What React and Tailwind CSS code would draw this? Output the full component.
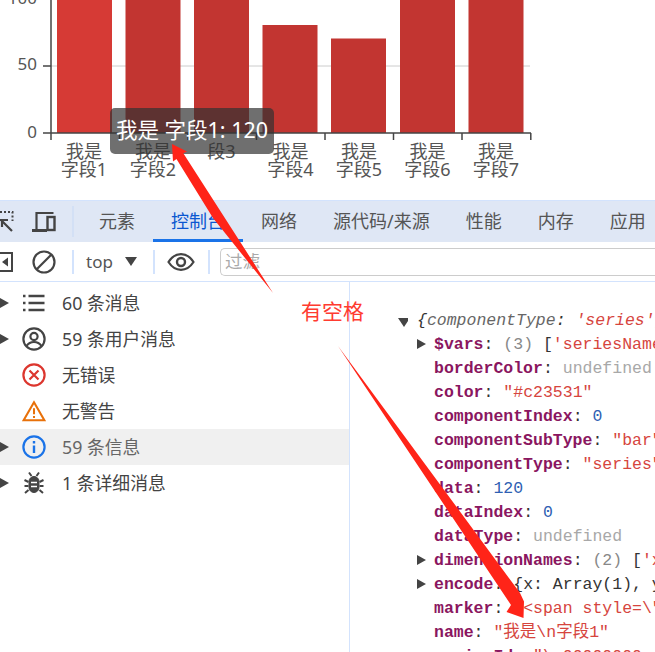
// App.jsx - echarts bar chart above a devtools console, with red annotation arrows

const bars = [
  { x: 57, top: -20, fill: "#d63a35" },
  { x: 125.5, top: -20, fill: "#c23531" },
  { x: 194, top: -20, fill: "#c23531" },
  { x: 262.5, top: 25, fill: "#c23531" },
  { x: 331, top: 38.5, fill: "#c23531" },
  { x: 400, top: -20, fill: "#c23531" },
  { x: 468.5, top: -20, fill: "#c23531" },
];

const labels = [
  { x: 84, lines: ["我是", "字段1"] },
  { x: 153, lines: ["我是", "字段2"] },
  { x: 221.5, lines: ["段3"] },
  { x: 290.5, lines: ["我是", "字段4"] },
  { x: 359, lines: ["我是", "字段5"] },
  { x: 427.5, lines: ["我是", "字段6"] },
  { x: 496, lines: ["我是", "字段7"] },
];

const tabs = ["元素", "控制台", "网络", "源代码/来源", "性能", "内存", "应用"];

function Chart() {
  return (
    <svg width="655" height="200" className="block fill-[#555] text-[18px]">
      <line x1="51" y1="66" x2="530" y2="66" stroke="#ccc" strokeWidth="1" />
      {bars.map((b) => (
        <rect key={b.x} x={b.x} y={b.top} width="55" height={133 - b.top} fill={b.fill} />
      ))}
      <line x1="51" y1="0" x2="51" y2="140" stroke="#444" strokeWidth="1.5" />
      <line x1="43" y1="66" x2="51" y2="66" stroke="#444" strokeWidth="1.5" />
      <line x1="43" y1="133" x2="531" y2="133" stroke="#444" strokeWidth="1.5" />
      {[119.5, 188, 256.5, 325, 393.5, 462, 530.8].map((x) => (
        <line key={x} x1={x} y1="133" x2={x} y2="140" stroke="#444" strokeWidth="1.5" />
      ))}
      <text x="37" y="4" textAnchor="end" className="text-[17px]">100</text>
      <text x="37" y="70" textAnchor="end" className="text-[17px]">50</text>
      <text x="37" y="138" textAnchor="end" className="text-[17px]">0</text>
      {labels.map((l) =>
        l.lines.map((t, i) => (
          <text key={t} x={l.x} y={158 + i * 18} textAnchor="middle">{t}</text>
        ))
      )}
    </svg>
  );
}

function Caret({ open, className }) {
  return (
    <svg width="10" height="10" viewBox="0 0 10 10" className={className}>
      <path d={open ? "M0 1h12L6 10z" : "M0 0l9 5-9 5z"} fill="#444" />
    </svg>
  );
}

function ToolbarTabs() {
  return (
    <div className="flex h-[42px] items-stretch overflow-hidden border-t border-[#d3e3fd] bg-[#dfe7f5]">
      <svg width="14" height="24" viewBox="0 0 14 24" className="mt-[8px] shrink-0 fill-none stroke-[#444]">
        <path d="M0 3h12.5v9" strokeWidth="2" strokeDasharray="2 2" />
        <path d="M12 22L1 11M0 11h8M2 10v8" strokeWidth="2.2" />
      </svg>
      <svg width="24" height="22" viewBox="0 0 24 22" className="ml-[18px] mt-[10px] shrink-0 fill-none stroke-[#444]">
        <path d="M4.5 19V2h17" strokeWidth="2.2" />
        <path d="M0 19.5h15" strokeWidth="3" />
        <rect x="15.5" y="6" width="7" height="13" strokeWidth="2.4" />
      </svg>
      <div className="ml-[16px] my-[5px] w-[2px] shrink-0 bg-[#d3e0f5]" />
      <div className="ml-[7px] flex shrink-0">
        {tabs.map((t) => (
          <div
            key={t}
            className={
              t === "控制台"
                ? "flex items-center whitespace-nowrap border-b-[3px] border-[#1a73e8] px-[18px] pt-[2px] text-[18px] text-[#0b57d0]"
                : "flex items-center whitespace-nowrap border-b-[3px] border-transparent px-[18px] pt-[2px] text-[18px] text-[#555]"
            }
          >
            {t}
          </div>
        ))}
      </div>
    </div>
  );
}

function FilterBar() {
  return (
    <div className="flex h-[40px] items-center border-b border-[#d3e3fd] bg-white">
      <svg width="13" height="20" viewBox="0 0 13 20" className="fill-none">
        <path d="M0 1h12v18H0" stroke="#444" strokeWidth="2" />
        <path d="M8 5.5v9L2 10z" fill="#444" />
      </svg>
      <svg width="24" height="24" viewBox="0 0 24 24" className="ml-[19px] fill-none stroke-[#444]">
        <circle cx="12" cy="12" r="10.5" strokeWidth="2.2" />
        <path d="M4.5 19.5l15-15" strokeWidth="2.2" />
      </svg>
      <div className="ml-[16px] h-[24px] w-[2px] bg-[#d3e3fd]" />
      <span className="ml-[12px] text-[17px] text-[#555]">top</span>
      <svg width="12" height="9" viewBox="0 0 12 9" className="ml-[12px]">
        <path d="M0 0h12L6 9z" fill="#444" />
      </svg>
      <div className="ml-[16px] h-[24px] w-[2px] bg-[#d3e3fd]" />
      <svg width="28" height="18" viewBox="0 0 28 18" className="ml-[12px] fill-none stroke-[#444]">
        <path d="M1.5 9C5 3.5 9 1.2 14 1.2S23 3.5 26.5 9C23 14.5 19 16.8 14 16.8S5 14.5 1.5 9z" strokeWidth="2.2" />
        <circle cx="14" cy="9" r="4" strokeWidth="2.4" />
      </svg>
      <div className="ml-[13px] h-[24px] w-[2px] bg-[#d3e3fd]" />
      <div className="ml-[10px] flex h-[28px] flex-1 items-center rounded-l-[5px] border border-r-0 border-[#ccc] pl-[4px] text-[17.5px] text-[#aaa]">
        过滤
      </div>
    </div>
  );
}

const IconList = () => (
  <svg width="24" height="24" viewBox="0 0 24 24" className="fill-none stroke-[#444]">
    <path d="M1 5h2.5M1 12h2.5M1 19h2.5" strokeWidth="2.5" />
    <path d="M6.5 5h16M6.5 12h16M6.5 19h16" strokeWidth="2.3" />
  </svg>
);

const IconUser = () => (
  <svg width="24" height="24" viewBox="0 0 24 24" className="fill-none stroke-[#444]">
    <circle cx="12" cy="12" r="10.6" strokeWidth="2.2" />
    <circle cx="12" cy="9.5" r="3.6" strokeWidth="2.2" />
    <path d="M4.5 19c2-3 4.500-4 7.500-4s5.500 1 7.500 4" strokeWidth="2.2" />
  </svg>
);

const IconError = () => (
  <svg width="24" height="24" viewBox="0 0 24 24" className="fill-none stroke-[#dc362e]">
    <circle cx="12" cy="12" r="10.6" strokeWidth="2.2" />
    <path d="M7.500 7.500l9 9M16.500 7.500l-9 9" strokeWidth="2.2" />
  </svg>
);

const IconWarn = () => (
  <svg width="26" height="24" viewBox="0 0 26 24" className="fill-none stroke-[#e8710a]">
    <path d="M13 2.500L1.800 22h22.400z" strokeWidth="2.2" strokeLinejoin="miter" />
    <path d="M13 9v6.500M13 17.500v2" strokeWidth="2.200" />
  </svg>
);

const IconInfo = () => (
  <svg width="24" height="24" viewBox="0 0 24 24" className="fill-none stroke-[#1a73e8]">
    <circle cx="12" cy="12" r="10.6" strokeWidth="2.2" />
    <path d="M12 10.500V18M12 6v2.400" strokeWidth="2.400" />
  </svg>
);

const IconBug = () => (
  <svg width="20" height="24" viewBox="0 0 20 24" className="fill-none stroke-[#444]">
    <path d="M5 1.500l2.500 3.500M15 1.500L12.500 5M0.500 9l4 2M19.500 9l-4 2M0.500 15h4M19.500 15h-4M1 22l3.500-3M19 22l-3.500-3" strokeWidth="2" />
    <rect x="5" y="5.500" width="10" height="16" rx="5" fill="#444" strokeWidth="1" />
    <path d="M7 11.500h6M7 15.500h6" stroke="#fff" strokeWidth="1.500" />
  </svg>
);

const sideRows = [
  { text: "60 条消息", Icon: IconList, caret: true },
  { text: "59 条用户消息", Icon: IconUser, caret: true },
  { text: "无错误", Icon: IconError },
  { text: "无警告", Icon: IconWarn },
  { text: "59 条信息", Icon: IconInfo, caret: true, active: true },
  { text: "1 条详细消息", Icon: IconBug, caret: true },
];

function Sidebar() {
  return (
    <div className="w-[350px] shrink-0 border-r border-[#d3e3fd] pt-[3px]">
      {sideRows.map(({ text, Icon, caret, active }) => (
        <div
          key={text}
          className={
            active
              ? "flex h-[36px] items-center bg-[#f0f0f0] text-[17.8px] text-[#666]"
              : "flex h-[36px] items-center text-[17.8px] text-[#444]"
          }
        >
          <div className="w-[22px] shrink-0">{caret && <Caret />}</div>
          <div className="flex w-[24px] justify-center">
            <Icon />
          </div>
          <span className="ml-[16px] pt-[1px]">{text}</span>
        </div>
      ))}
    </div>
  );
}

const K = ({ children }) => <span className="font-bold text-[#8a1660]">{children}</span>;
const Str = ({ children }) => <span className="text-[#d6453e]">{children}</span>;
const Num = ({ children }) => <span className="text-[#2f5fb3]">{children}</span>;
const Dim = ({ children }) => <span className="text-[#a8a8a8]">{children}</span>;

function Prop({ caret, children }) {
  return (
    <div className="relative h-[24px] pl-[84px] leading-[24px]">
      {caret && <Caret className="absolute left-[67px] top-[6px]" />}
      {children}
    </div>
  );
}

function ObjectView() {
  return (
    <div className="min-w-0 flex-1 overflow-hidden whitespace-nowrap pt-[27px] font-['Liberation_Mono','Noto_Sans_CJK_SC',monospace] text-[16.5px] text-[#333]">
      <div className="relative h-[24px] pl-[67px] italic leading-[24px]">
        <Caret open className="absolute left-[48px] top-[8px]" />
        {"{"}
        <span className="text-[#666]">componentType</span>: <Str>'series'</Str>, name: 'bar'
      </div>
      <Prop caret><K>$vars</K>: <span className="text-[#888]">(3)</span> [<Str>'seriesName'</Str>, 'name']</Prop>
      <Prop><K>borderColor</K>: <Dim>undefined</Dim></Prop>
      <Prop><K>color</K>: <Str>"#c23531"</Str></Prop>
      <Prop><K>componentIndex</K>: <Num>0</Num></Prop>
      <Prop><K>componentSubType</K>: <Str>"bar"</Str></Prop>
      <Prop><K>componentType</K>: <Str>"series"</Str></Prop>
      <Prop><K>data</K>: <Num>120</Num></Prop>
      <Prop><K>dataIndex</K>: <Num>0</Num></Prop>
      <Prop><K>dataType</K>: <Dim>undefined</Dim></Prop>
      <Prop caret><K>dimensionNames</K>: <span className="text-[#888]">(2)</span> [<Str>'x'</Str>, 'y']</Prop>
      <Prop caret><K>encode</K>: {"{"}x: Array(1), y: Array(1){"}"}</Prop>
      <Prop><K>marker</K>: <Str>"&lt;span style=\"display</Str></Prop>
      <Prop><K>name</K>: <Str>"我是\n字段1"</Str></Prop>
      <Prop><K>seriesId</K>: <Str>"\u00000000series"</Str></Prop>
    </div>
  );
}

function Arrows() {
  return (
    <svg width="655" height="652" className="pointer-events-none absolute left-0 top-0">
      <path d="M172 144L187 151.500L183.300 153.300L273 293L213 218L176.500 159L173 161.500z" fill="#ff2418" />
      <path d="M338 346L520 593L524 601.500L523.500 618L506.500 612L511 605z" fill="#ff2418" />
    </svg>
  );
}

export default function App() {
  return (
    <div className="relative h-[652px] w-[655px] overflow-hidden bg-white font-['Noto_Sans','Noto_Sans_CJK_SC',sans-serif]">
      <Chart />
      <ToolbarTabs />
      <FilterBar />
      <div className="flex h-[370px]">
        <Sidebar />
        <ObjectView />
      </div>

      {/* tooltip over the chart */}
      <div className="absolute left-[110px] top-[108px] flex h-[46px] w-[164px] items-center justify-center rounded-[5px] bg-[rgba(50,50,50,0.7)] pb-[2px] text-[21.5px] text-white">
        我是 字段1: 120
      </div>

      <Arrows />
      <div className="absolute left-[301px] top-[296px] text-[21px] text-[#ff3b30]">有空格</div>
    </div>
  );
}
